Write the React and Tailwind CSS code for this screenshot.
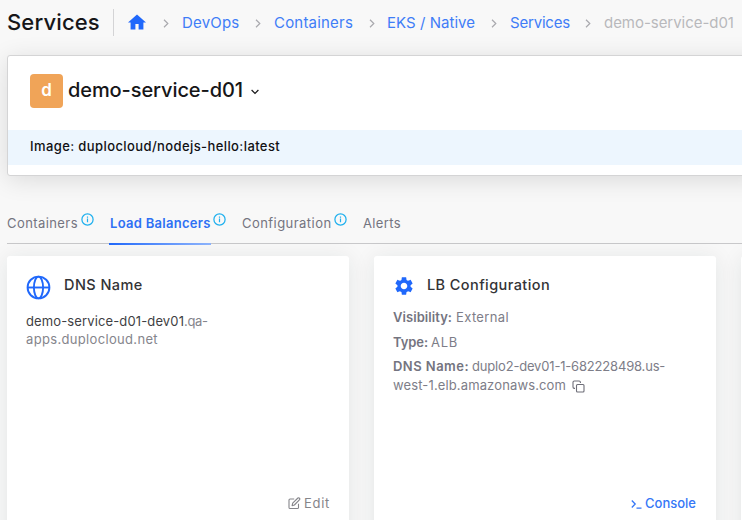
import React from 'react';

function Chevron() {
  return (
    <svg className="mt-px h-[9px] w-[6px] shrink-0" viewBox="0 0 6 9" fill="none" stroke="#a9a9ae" strokeWidth="1.2">
      <path d="M1 .8 4.8 4.5 1 8.2" />
    </svg>
  );
}

function Info() {
  return (
    <svg className="mb-[7px] ml-[3px] h-[13px] w-[13px] shrink-0" viewBox="0 0 13 13" fill="none" stroke="#1fb0ee">
      <circle cx="6.5" cy="6.5" r="5.6" strokeWidth="1.25" />
      <path d="M6.5 5.6v3.6M6.5 3.6v1.1" strokeWidth="1.2" />
    </svg>
  );
}

function Crumb({ gap, width, className, children }) {
  return (
    <>
      <span className={gap}><Chevron /></span>
      <span className={`${width} shrink-0 whitespace-nowrap text-[15px] leading-5 ${className}`}>{children}</span>
    </>
  );
}

function Header() {
  return (
    <header className="flex h-[55px] items-start">
      <h1 className="ml-[7px] mt-[8px] w-[106px] shrink-0 text-[22px] font-medium leading-7 tracking-[0.15px] text-[#161618]">Services</h1>
      <nav className="mt-[9px] flex h-[27px] items-center border-l border-[#d4d4d6]">
        <svg className="ml-[14px] mt-[-2px] h-[16px] w-[18px] shrink-0" viewBox="0 0 18 16" fill="#2068fb">
          <path d="M9 .5 18 8.5h-2.6V15.4h-4.8V10H7.4v5.4H2.6V8.5H0z" />
        </svg>
        <Crumb gap="ml-[17px] mr-[13px]" width="w-[57px]" className="tracking-[0.2px] text-[#3f7df7]">DevOps</Crumb>
        <Crumb gap="ml-[16px] mr-[13px]" width="w-[80px]" className="tracking-[0.2px] text-[#3f7df7]">Containers</Crumb>
        <Crumb gap="ml-[15px] mr-[12px]" width="w-[88px]" className="tracking-[0.04px] text-[#3f7df7]">EKS / Native</Crumb>
        <Crumb gap="ml-[16px] mr-[13px]" width="w-[60px]" className="tracking-[-0.19px] text-[#3f7df7]">Services</Crumb>
        <Crumb gap="ml-[15px] mr-[13px]" width="w-[132px]" className="tracking-[-0.04px] text-[#b8b8bc]">demo-service-d01</Crumb>
      </nav>
    </header>
  );
}

function ServicePanel() {
  return (
    <section className="ml-[7px] h-[121px] w-[760px] rounded-[3px] border border-[#d4d4d5] bg-white shadow-[0_4px_24px_rgba(0,0,0,0.12)]">
      <div className="flex h-[74px] items-start pl-[22px] pt-[18px]">
        <span className="flex h-[34px] w-[33px] items-center justify-center rounded-[4px] bg-[#f0a458] text-[17px] font-semibold text-white">d</span>
        <h2 className="ml-[5px] mt-[4px] w-[176px] whitespace-nowrap text-[20px] font-medium leading-6 tracking-[-0.09px] text-[#161618]">demo-service-d01</h2>
        <svg className="ml-[7px] mt-[15px] h-[6px] w-[8px]" viewBox="0 0 8 6" fill="none" stroke="#161618" strokeWidth="1.2">
          <path d="M.6 1 4 4.4 7.4 1" />
        </svg>
      </div>
      <div className="h-[35px] bg-[#edf6fe] pl-[22px] text-[13px] font-medium leading-[32px] tracking-[0.4px] text-[#111114]">
        Image: duplocloud/nodejs-hello:latest
      </div>
    </section>
  );
}

function Tabs() {
  return (
    <div className="ml-[7px] mt-[31px] flex h-[37px] w-[735px] items-start border-b border-[#c8c8ca] text-[13px] leading-[32px] text-[#747480]">
      <div className="flex w-[102px] items-center"><span className="w-[71px] tracking-[0.42px]">Containers</span><Info /></div>
      <div className="flex w-[133px]">
        <div className="flex h-[37px] w-[102px] shrink-0 flex-col justify-between">
          <span className="whitespace-nowrap pl-px font-semibold tracking-[0.28px] text-[#2e70f4]">Load Balancers</span>
          <span className="mb-[-1px] h-[2px] bg-gradient-to-r from-[#2068fb] to-[#8fb5fd]" />
        </div>
        <span className="-ml-px flex h-[32px] items-center"><Info /></span>
      </div>
      <div className="flex w-[121px] items-center"><span className="w-[89px] tracking-[0.45px]">Configuration</span><Info /></div>
      <span className="tracking-[0.37px]">Alerts</span>
    </div>
  );
}

function Globe() {
  return (
    <svg className="h-[25px] w-[25px]" viewBox="0 0 25 25" fill="none" stroke="#2068fb" strokeWidth="1.9">
      <circle cx="12.5" cy="12.5" r="10.9" />
      <ellipse cx="12.5" cy="12.5" rx="4.6" ry="10.9" />
      <path d="M1.6 12.5h21.8" />
    </svg>
  );
}

function Gear() {
  return (
    <svg className="h-[22px] w-[22px]" viewBox="0 0 24 24" fill="#2068fb">
      <path d="M19.14 12.94c.04-.3.06-.61.06-.94 0-.32-.02-.64-.07-.94l2.03-1.58c.18-.14.23-.41.12-.61l-1.92-3.32c-.12-.22-.37-.29-.59-.22l-2.39.96c-.5-.38-1.03-.7-1.62-.94L14.4 2.81c-.04-.24-.24-.41-.48-.41h-3.84c-.24 0-.43.17-.47.41l-.36 2.54c-.59.24-1.13.57-1.62.94l-2.39-.96c-.22-.08-.47 0-.59.22L2.74 8.87c-.12.21-.08.47.12.61l2.03 1.58c-.05.3-.09.63-.09.94s.02.64.07.94l-2.03 1.58c-.18.14-.23.41-.12.61l1.92 3.32c.12.22.37.29.59.22l2.39-.96c.5.38 1.03.7 1.62.94l.36 2.54c.05.24.24.41.48.41h3.84c.24 0 .44-.17.47-.41l.36-2.54c.59-.24 1.13-.56 1.62-.94l2.39.96c.22.08.47 0 .59-.22l1.92-3.32c.12-.22.07-.47-.12-.61l-2.01-1.58zM12 15.6c-1.98 0-3.6-1.62-3.6-3.6s1.62-3.6 3.6-3.6 3.6 1.62 3.6 3.6-1.62 3.6-3.6 3.6z" />
    </svg>
  );
}

const cardClass = 'flex h-[300px] w-[342px] shrink-0 flex-col rounded-[3px] bg-white text-[13px] text-[#7d7d88] shadow-[0_2px_22px_rgba(20,40,40,0.09)]';

function DnsCard() {
  return (
    <article className={cardClass}>
      <div className="flex pl-[19px] pt-[19px]">
        <Globe />
        <h3 className="ml-[13px] text-[14.5px] font-medium leading-[20px] tracking-[0.43px] text-[#333336]">DNS Name</h3>
      </div>
      <div className="ml-[19px] mt-[12px] whitespace-nowrap leading-[18px]">
        <p className="flex"><span className="w-[158px] tracking-[0.13px] text-[#3f3f44]">demo-service-d01-dev01</span><span className="tracking-[-0.37px] text-[#85858c]">.qa-</span></p>
        <p className="tracking-[0.33px] text-[#85858c]">apps.duplocloud.net</p>
      </div>
      <div className="mb-[44px] mr-[19px] mt-auto flex items-center justify-end leading-[18px] text-[#85858a]">
        <svg className="mr-[3px] h-[13px] w-[13px]" viewBox="0 0 13 13" fill="none" stroke="currentColor" strokeWidth="1.1" strokeLinejoin="round">
          <path d="M6.2 2H2.1Q1 2 1 3.1v7.3q0 1.1 1.1 1.1h7.3q1.1 0 1.1-1.1V6.7" />
          <path d="m4.1 8.6.6-2.4L9.9 1q.6-.5 1.2 0l.5.5q.6.6 0 1.2L6.4 8z" />
        </svg>
        <span className="w-[26px] tracking-[0.7px]">Edit</span>
      </div>
    </article>
  );
}

function ConfigCard() {
  return (
    <article className={cardClass}>
      <div className="flex h-[51px] pl-[19px] pt-[19px]">
        <Gear />
        <h3 className="ml-[12px] text-[14.5px] font-medium leading-[20px] tracking-[0.41px] text-[#333336]">LB Configuration</h3>
      </div>
      <div className="ml-[19px] flex flex-col whitespace-nowrap leading-[19px]">
        <p className="mt-px flex"><b className="w-[63px] font-semibold tracking-[0.06px] text-[#747480]">Visibility:</b><span className="tracking-[0.36px]">External</span></p>
        <p className="mt-[6px] flex"><b className="w-[38px] font-semibold tracking-[-0.07px] text-[#747480]">Type:</b><span className="tracking-[0.72px]">ALB</span></p>
        <p className="mt-[5px] flex"><b className="w-[79px] font-semibold tracking-[0.46px] text-[#747480]">DNS Name:</b><span className="tracking-[-0.18px]">duplo2-dev01-1-682228498.us-</span></p>
        <p className="flex items-center"><span className="w-[173px] tracking-[0.13px]">west-1.elb.amazonaws.com</span>
          <svg className="ml-[6px] mt-[2px] h-[13px] w-[13px]" viewBox="0 0 13 13" fill="none" stroke="#6e6e78" strokeWidth="1.1">
            <rect x="4.5" y="4.5" width="7.5" height="7.5" rx="1" />
            <path d="M3 8.4h-.7Q1 8.4 1 7.1V2.3Q1 1 2.3 1h4.8q1.3 0 1.3 1.3V3" />
          </svg>
        </p>
      </div>
      <div className="mb-[44px] mr-[20px] mt-auto flex items-center justify-end leading-[18px] text-[#3577f7]">
        <svg className="mr-[3px] mt-px h-[10px] w-[11px]" viewBox="0 0 11 10" fill="none" stroke="currentColor" strokeWidth="1.3">
          <path d="M.8 1.5 4.2 5 .8 8.5M5.5 9.2h5" />
        </svg>
        <span className="font-medium">Console</span>
      </div>
    </article>
  );
}

export default function App() {
  return (
    <main className="h-[520px] w-[742px] overflow-hidden bg-[#f8f8f8] font-['Inter',sans-serif]">
      <Header />
      <ServicePanel />
      <Tabs />
      <div className="ml-[7px] mt-[12px] flex gap-[25px]">
        <DnsCard />
        <ConfigCard />
        <article className={cardClass} />
      </div>
    </main>
  );
}
